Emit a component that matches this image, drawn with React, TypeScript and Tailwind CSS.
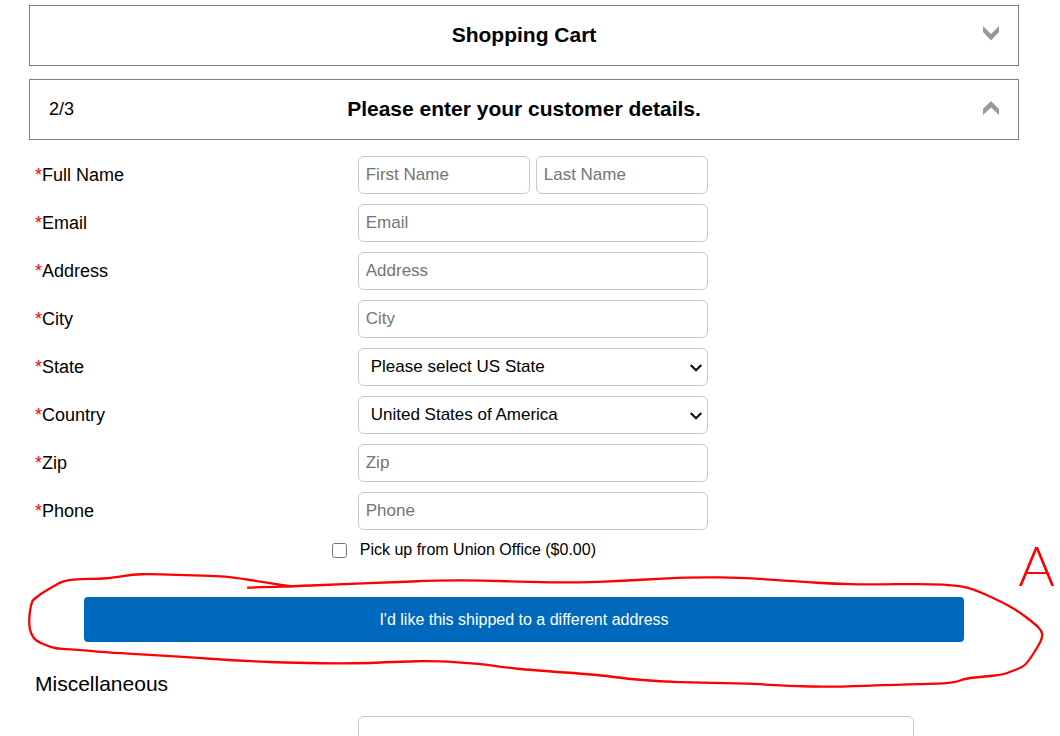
import { useState } from "react";

const fields = [
  { id: "email", label: "Email" },
  { id: "address", label: "Address" },
  { id: "city", label: "City" },
  { id: "state", label: "State", options: ["Please select US State", "Alabama", "Alaska", "Arizona"] },
  { id: "country", label: "Country", options: ["United States of America", "Canada"] },
  { id: "zip", label: "Zip" },
  { id: "phone", label: "Phone" },
];

const inputStyle =
  "h-[38px] w-full min-w-0 rounded-md border border-[#c8c8c8] bg-white px-[7px] text-[17px] text-black outline-none placeholder:text-[#757575] focus:border-[#0069bd]";

const selectStyle =
  "h-[38px] w-full appearance-none rounded-md border border-[#c8c8c8] bg-white pr-8 pl-3 text-[17px] text-black outline-none focus:border-[#0069bd]";

// Points of the marker line drawn round the shipping button
const markerLine = [
  [248, 587.7], [270, 586.8], [292, 586.3], [330, 584.7], [383, 582.7], [440, 580.3], [483, 580.5],
  [530, 582], [573, 582.6], [623, 581], [670, 578], [700, 577.2], [740, 577.5], [800, 581.7],
  [835, 583.8], [865, 584.5], [930, 583.8], [955, 585.3], [972, 588.5], [1000, 601], [1018, 611],
  [1035, 624], [1042, 631], [1042.5, 638], [1037, 648], [1028, 662], [1022, 667.5], [1012, 671],
  [1004, 674.5], [985, 676.5], [965, 678.5], [957, 682], [940, 683.7], [900, 684.6], [830, 687],
  [790, 686], [750, 683.6], [700, 682.8], [660, 681.5], [620, 678], [600, 675], [530, 670],
  [505, 667.5], [480, 663.6], [435, 661], [400, 661.5], [370, 663], [340, 663.5], [300, 663],
  [240, 661], [180, 656.5], [110, 652.7], [75, 649.5], [57, 648.7], [48, 646], [36, 641],
  [31, 634], [29, 625], [29.5, 613], [32, 601], [35, 598.5], [42, 593], [55, 585.5], [60, 582.5],
  [67, 580.3], [80, 579], [100, 578.8], [113, 577.7], [133, 574.5], [150, 574], [187, 575.3],
  [217, 576], [233, 577.3], [267, 582.7], [292, 586.5],
];

const toPath = (points: number[][]) => {
  let d = `M${points[0][0]} ${points[0][1]}`;
  for (let i = 1; i < points.length - 1; i++) {
    const [x, y] = points[i];
    const [nextX, nextY] = points[i + 1];
    d += ` Q${x} ${y} ${(x + nextX) / 2} ${(y + nextY) / 2}`;
  }
  const last = points[points.length - 1];
  return `${d} L${last[0]} ${last[1]}`;
};

type StepHeaderProps = {
  step?: string;
  title: string;
  open: boolean;
  onClick: () => void;
};

const StepHeader = ({ step, title, open, onClick }: StepHeaderProps) => {
  return (
    <button
      type="button"
      aria-expanded={open}
      onClick={onClick}
      className="grid h-[61px] w-full cursor-pointer grid-cols-[1fr_auto_1fr] items-center border border-[#808080] px-[19px] pb-0.5"
    >
      <span className="text-left text-lg">{step}</span>
      <span className="text-[21px] font-bold">{title}</span>
      <svg
        width="16"
        height="16"
        viewBox="0 0 16 16"
        fill="#999999"
        className={open ? "mb-0.5 justify-self-end" : "mb-1 justify-self-end"}
      >
        {open ? (
          <path d="M8 1l8 8v6L8 7.5 0 15V9z" />
        ) : (
          <path d="M0 1l8 8 8-8v6l-8 8.5L0 7z" />
        )}
      </svg>
    </button>
  );
};

const FieldLabel = ({ id, label }: { id: string; label: string }) => (
  <label htmlFor={id} className="w-[33%] shrink-0 text-lg">
    <span className="text-[#ff0000]">*</span>
    {label}
  </label>
);

const App = () => {
  const [cartOpen, setCartOpen] = useState(false);
  const [detailsOpen, setDetailsOpen] = useState(true);

  return (
    <main className="bg-white pt-[5px] pr-[41px] pl-[29px] font-['Liberation_Sans',Arial,sans-serif] text-black">
      <div className="flex flex-col gap-[13px]">
        <StepHeader title="Shopping Cart" open={cartOpen} onClick={() => setCartOpen(!cartOpen)} />
        <StepHeader
          step="2/3"
          title="Please enter your customer details."
          open={detailsOpen}
          onClick={() => setDetailsOpen(!detailsOpen)}
        />
      </div>

      {detailsOpen && (
        <form onSubmit={(e) => e.preventDefault()}>
          <div className="flex flex-col gap-2.5 px-1.5 pt-4">
            <div className="flex items-center">
              <FieldLabel id="first-name" label="Full Name" />
              <div className="flex w-full max-w-[350px] gap-1.5">
                <input id="first-name" placeholder="First Name" className={inputStyle} />
                <input aria-label="Last Name" placeholder="Last Name" className={inputStyle} />
              </div>
            </div>

            {fields.map((field) => (
              <div key={field.id} className="flex items-center">
                <FieldLabel id={field.id} label={field.label} />
                <div className="relative w-full max-w-[350px]">
                  {field.options ? (
                    <>
                      <select id={field.id} className={selectStyle}>
                        {field.options.map((option) => (
                          <option key={option}>{option}</option>
                        ))}
                      </select>
                      <svg
                        width="14"
                        height="10"
                        viewBox="0 0 14 10"
                        fill="none"
                        stroke="#101010"
                        strokeWidth="2.2"
                        className="pointer-events-none absolute top-[15px] right-[5px]"
                      >
                        <path d="M1.7 2L7 7.3 12.3 2" />
                      </svg>
                    </>
                  ) : (
                    <input id={field.id} placeholder={field.label} className={inputStyle} />
                  )}
                </div>
              </div>
            ))}

            <div className="flex h-5 items-center">
              <div className="flex w-[33%] shrink-0 justify-end pr-[11px]">
                <input id="pickup" type="checkbox" className="size-[15px]" />
              </div>
              <label htmlFor="pickup" className="pl-0.5 text-base">
                Pick up from Union Office ($0.00)
              </label>
            </div>
          </div>

          <div className="relative mt-[37px] px-[55px]">
            <button
              type="button"
              className="h-[45px] w-full cursor-pointer rounded bg-[#0069bd] text-base text-white"
            >
              I'd like this shipped to a different address
            </button>
            <svg
              width="1060"
              height="160"
              viewBox="0 540 1060 160"
              fill="none"
              className="pointer-events-none absolute -top-[57px] -left-[29px] max-w-none"
            >
              <path
                d={toPath(markerLine)}
                stroke="#ff0000"
                strokeWidth="2.3"
                strokeLinecap="round"
                strokeLinejoin="round"
              />
            </svg>
            <span className="pointer-events-none absolute -top-[62px] -right-9 font-[Lato] text-[56px] leading-[60px] font-light text-[#ff0000]">
              A
            </span>
          </div>

          <div className="px-1.5 pt-7">
            <label htmlFor="misc" className="block text-[21px] leading-7">
              Miscellaneous
            </label>
            <div className="flex pt-[18px]">
              <div className="w-[33%] shrink-0" />
              <textarea
                id="misc"
                className="h-24 w-full max-w-[556px] resize-none rounded-md border border-[#c8c8c8] p-2 text-[17px] outline-none"
              />
            </div>
          </div>
        </form>
      )}
    </main>
  );
};

export default App;
